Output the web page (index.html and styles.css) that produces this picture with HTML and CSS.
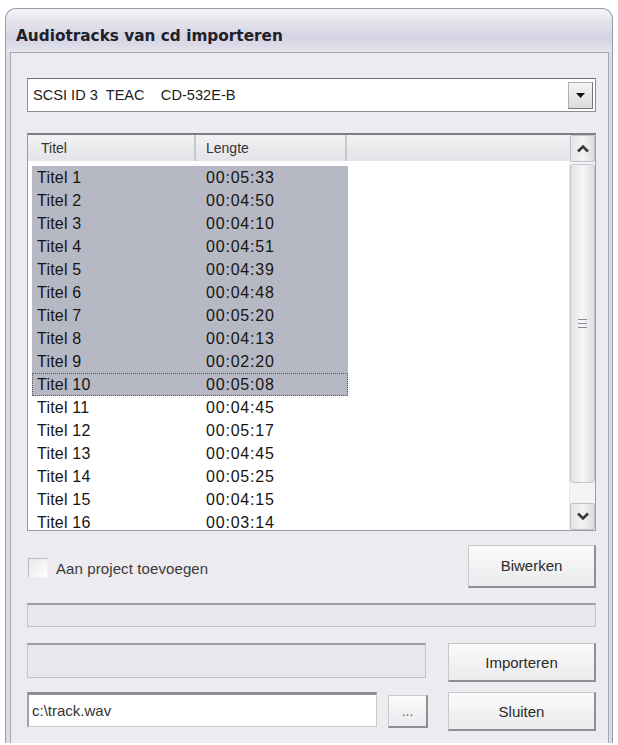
FILE: index.html
```html
<!DOCTYPE html>
<html>
<head>
<meta charset="utf-8">
<link rel="stylesheet" href="styles.css">
</head>
<body>
<div class="window">
  <div class="titlebar"><span class="title">Audiotracks van cd importeren</span></div>
  <div class="client">
    <div class="combo">
      <span class="combo-text">SCSI ID 3  TEAC    CD-532E-B</span>
      <span class="combo-btn"><svg width="9" height="5" viewBox="0 0 9 5"><path d="M0 0H9L4.5 5Z" fill="#111"/></svg></span>
    </div>
    <div class="list">
      <div class="list-main">
        <div class="header">
          <div class="hcell c1">Titel</div>
          <div class="hcell c2">Lengte</div>
          <div class="hcell c3"></div>
        </div>
        <div class="rows">
          <div class="row sel"><span class="c1">Titel 1</span><span class="c2">00:05:33</span></div>
          <div class="row sel"><span class="c1">Titel 2</span><span class="c2">00:04:50</span></div>
          <div class="row sel"><span class="c1">Titel 3</span><span class="c2">00:04:10</span></div>
          <div class="row sel"><span class="c1">Titel 4</span><span class="c2">00:04:51</span></div>
          <div class="row sel"><span class="c1">Titel 5</span><span class="c2">00:04:39</span></div>
          <div class="row sel"><span class="c1">Titel 6</span><span class="c2">00:04:48</span></div>
          <div class="row sel"><span class="c1">Titel 7</span><span class="c2">00:05:20</span></div>
          <div class="row sel"><span class="c1">Titel 8</span><span class="c2">00:04:13</span></div>
          <div class="row sel"><span class="c1">Titel 9</span><span class="c2">00:02:20</span></div>
          <div class="row sel focus"><span class="c1">Titel 10</span><span class="c2">00:05:08</span></div>
          <div class="row"><span class="c1">Titel 11</span><span class="c2">00:04:45</span></div>
          <div class="row"><span class="c1">Titel 12</span><span class="c2">00:05:17</span></div>
          <div class="row"><span class="c1">Titel 13</span><span class="c2">00:04:45</span></div>
          <div class="row"><span class="c1">Titel 14</span><span class="c2">00:05:25</span></div>
          <div class="row"><span class="c1">Titel 15</span><span class="c2">00:04:15</span></div>
          <div class="row"><span class="c1">Titel 16</span><span class="c2">00:03:14</span></div>
        </div>
      </div>
      <div class="scrollbar">
        <div class="sb-btn"><svg width="14" height="9" viewBox="0 0 14 9"><path d="M2 7.5L7 2.5L12 7.5" fill="none" stroke="#3a3a3a" stroke-width="2.6"/></svg></div>
        <div class="sb-track">
          <div class="sb-thumb">
            <div class="grip"><i></i><i></i><i></i></div>
          </div>
        </div>
        <div class="sb-btn"><svg width="14" height="9" viewBox="0 0 14 9"><path d="M2 1.5L7 6.5L12 1.5" fill="none" stroke="#3a3a3a" stroke-width="2.6"/></svg></div>
      </div>
    </div>
    <div class="line1">
      <label class="check"><span class="box"></span><span class="lbl">Aan project toevoegen</span></label>
      <div class="btn btn-wide">Biwerken</div>
    </div>
    <div class="progress full"></div>
    <div class="line3">
      <div class="progress part"></div>
      <div class="btn btn-wide tall">Importeren</div>
    </div>
    <div class="line4">
      <div class="textbox">c:\track.wav</div>
      <div class="btn btn-dots">...</div>
      <div class="btn btn-wide tall">Sluiten</div>
    </div>
  </div>
</div>
</body>
</html>
```

FILE: styles.css
```css
* { box-sizing: border-box; }
html, body { margin: 0; padding: 0; background: #ffffff; }
body { font-family: "Liberation Sans", Arial, sans-serif; color: #1a1a1a; }

.window {
  margin: 8px 5px 0 5px;
  width: 608px;
  height: 735px;
  border: 1px solid #9a9aa6;
  border-bottom: none;
  border-radius: 11px 11px 0 0;
  background: #dcdce6;
  display: flex;
  flex-direction: column;
  overflow: hidden;
}

.titlebar {
  height: 43px;
  flex: none;
  display: flex;
  align-items: center;
  padding: 10px 0 0 10px;
  background: linear-gradient(#f6f6f9 0%, #e4e3ec 30%, #d5d4e4 65%, #dcdbe8 85%, #e6e6ee 100%);
}
.title {
  font-family: "DejaVu Sans", Verdana, sans-serif;
  font-weight: bold;
  font-size: 15.3px;
  color: #202028;
}

.client {
  flex: 1;
  margin: 0 3px 0 4px;
  border: 1px solid #a8a8b4;
  border-bottom: none;
  background: #ecebef;
  padding: 25px 12px 0 16px;
  display: flex;
  flex-direction: column;
}

.combo {
  height: 34px;
  flex: none;
  background: #ffffff;
  border: 1px solid #8c8c94;
  border-top-color: #6e6e76;
  display: flex;
  align-items: center;
  padding: 0 2px 0 5px;
}
.combo-text {
  flex: 1;
  white-space: pre;
  font-size: 14.6px;
  color: #222;
}
.combo-btn {
  width: 25px;
  height: 27px;
  display: flex;
  align-items: center;
  justify-content: center;
  background: linear-gradient(#f4f4f4, #dcdcdc);
  border: 1px solid #b0b0b0;
  border-right-color: #777;
  border-bottom-color: #777;
}

.list {
  margin-top: 21px;
  height: 398px;
  flex: none;
  background: #ffffff;
  border: 1px solid #9c9ca4;
  border-top: 2px solid #7c7c84;
  display: flex;
  overflow: hidden;
}
.list-main { flex: 1; display: flex; flex-direction: column; overflow: hidden; }
.header {
  height: 29px;
  flex: none;
  display: flex;
  background: linear-gradient(#f2f2f4, #e4e4e8);
  border-bottom: 3px solid #ffffff;
}
.hcell {
  font-size: 14px;
  color: #333;
  display: flex;
  align-items: center;
  padding-left: 13px;
  border-right: 2px solid #c8c8cc;
}
.hcell.c1 { width: 168px; }
.hcell.c2 { width: 151px; padding-left: 10px; }
.hcell.c3 { flex: 1; border-right: none; }

.rows { padding: 2px 0 0 4px; }
.row {
  height: 23px;
  width: 316px;
  display: flex;
  align-items: center;
  font-size: 16px;
  color: #151515;
}
.row.sel { background: #b6b9c3; }
.row.focus { outline: 1px dotted #55555c; outline-offset: -1px; }
.row .c1 { width: 174px; padding-left: 5px; letter-spacing: 0.2px; }
.row .c2 { width: 142px; letter-spacing: 0.8px; }

.scrollbar {
  width: 26px;
  flex: none;
  display: flex;
  flex-direction: column;
  background: #f4f4f6;
  border-left: 1px solid #e6e6ea;
}
.sb-btn {
  height: 27px;
  flex: none;
  display: flex;
  align-items: center;
  justify-content: center;
  background: linear-gradient(90deg, #e4e4e8, #f4f4f6 50%, #dcdce0);
  border: 1px solid #c0c0c6;
  border-radius: 2px;
}
.sb-track { flex: 1; padding: 2px 0 20px; display: flex; }
.sb-thumb {
  flex: 1;
  border: 1px solid #c4c4ca;
  border-radius: 3px;
  background: linear-gradient(90deg, #e2e2e6, #f6f6f8 50%, #dedee2);
  display: flex;
  align-items: center;
  justify-content: center;
}
.grip { display: flex; flex-direction: column; gap: 3px; }
.grip i { display: block; width: 9px; height: 1px; background: #8a8a90; }

.line1 {
  margin-top: 13px;
  height: 44px;
  flex: none;
  display: flex;
  align-items: center;
  justify-content: space-between;
}
.check { display: flex; align-items: center; gap: 8px; padding-left: 1px; margin-top: 4px; }
.box {
  width: 20px;
  height: 20px;
  border: 1px solid #b8b8be;
  border-right-color: #f0f0f2;
  border-bottom-color: #f0f0f2;
  background: linear-gradient(135deg, #e8e8ec, #ffffff);
}
.lbl { font-size: 15px; color: #3a3a3a; letter-spacing: 0.1px; }

.btn {
  display: flex;
  align-items: center;
  justify-content: center;
  font-size: 15px;
  color: #2a2a2a;
  background: linear-gradient(#fafafa, #ebebee);
  border: 1px solid #c8c8cc;
  border-right: 2px solid #8e8e94;
  border-bottom: 2px solid #8e8e94;
}
.btn-wide { width: 128px; height: 43px; }
.btn-wide.tall { width: 148px; height: 39px; }
.btn-dots { width: 40px; height: 33px; margin-left: 11px; margin-top: 3px; color: #666; font-size: 14px; }

.progress {
  height: 24px;
  flex: none;
  border: 1px solid #c2c2c8;
  border-top: 2px solid #9c9ca4;
  background: #e8e8ec;
}
.progress.full { margin-top: 15px; }

.line3 {
  margin-top: 16px;
  height: 39px;
  flex: none;
  display: flex;
  justify-content: space-between;
}
.progress.part { width: 399px; height: 35px; }

.line4 {
  margin-top: 10px;
  height: 39px;
  flex: none;
  display: flex;
  align-items: flex-start;
}
.line4 .btn-wide { margin-left: auto; }
.textbox {
  width: 350px;
  height: 35px;
  background: #ffffff;
  border: 1px solid #c8c8cc;
  border-top: 3px solid #8c8c94;
  border-left: 2px solid #a0a0a8;
  display: flex;
  align-items: center;
  padding-left: 3px;
  font-size: 15px;
  color: #333;
}
```
